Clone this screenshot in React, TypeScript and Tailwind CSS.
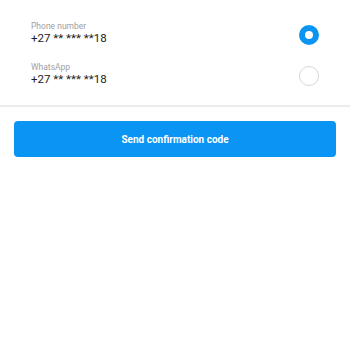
import { useState } from "react";

const OPTIONS = [
  { id: "phone", label: "Phone number", value: "+27 ** *** **18" },
  { id: "whatsapp", label: "WhatsApp", value: "+27 ** *** **18" },
];

export default function App() {
  const [selected, setSelected] = useState("phone");

  return (
    <div className="min-h-screen bg-white font-['Roboto',sans-serif]">
      <div className="pt-[14.5px] pb-[8.5px]">
        {OPTIONS.map((o) => (
          <button
            key={o.id}
            onClick={() => setSelected(o.id)}
            className="flex h-[41px] w-full items-center justify-between pl-[31px] pr-[31px] text-left"
          >
            <div className="mb-[4px] flex flex-col">
              <span className="text-[8.5px] leading-[10px] text-[#a0a0a0]">{o.label}</span>
              <span className="text-[11.5px] leading-[14px] text-[#212121]">{o.value}</span>
            </div>
            {selected === o.id ? (
              <span className="h-[20px] w-[20px] rounded-full border-[6.5px] border-[#0a95f3] bg-white" />
            ) : (
              <span className="h-[20px] w-[20px] rounded-full border border-[#d6d6d6] bg-white" />
            )}
          </button>
        ))}
      </div>
      <div className="h-[2px] bg-[#ececec]" />
      <div className="px-[14px] pt-[14px]">
        <button className="flex h-[36px] w-full items-center justify-center rounded-[4px] bg-[#0a95f5] text-[10px] font-bold text-white">
          Send confirmation code
        </button>
      </div>
    </div>
  );
}
